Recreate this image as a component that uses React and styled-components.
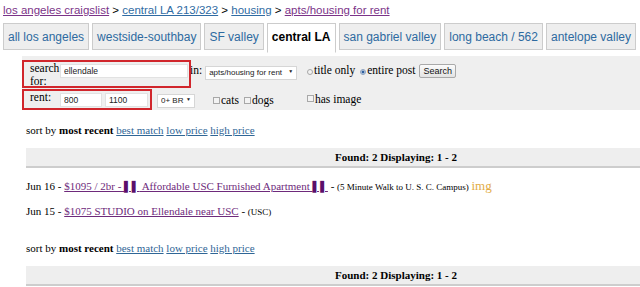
import React from 'react';
import styled, { createGlobalStyle, css } from 'styled-components';

const Global = createGlobalStyle`
  html, body { margin: 0; padding: 0; background: #fff; }
  body {
    font-family: "Liberation Serif", "Times New Roman", serif;
    font-size: 11px;
    color: #000;
    width: 640px;
    height: 287px;
    overflow: hidden;
  }
`;

const Page = styled.div`
  width: 640px;
  overflow: hidden;
`;

const Crumbs = styled.div`
  font-family: "Liberation Sans", Arial, sans-serif;
  font-size: 11.5px;
  line-height: 14px;
  height: 20px;
  box-sizing: border-box;
  padding: 3px 0 0 3px;
  white-space: nowrap;
`;

const CrumbLink = styled.a`
  color: ${p => (p.$visited ? '#7b3388' : '#2f6ba3')};
  text-decoration: underline;
`;

const Tabs = styled.div`
  display: flex;
  align-items: flex-start;
  gap: 3px;
  padding: 3px 0 0 3px;
`;

const Tab = styled.a`
  font-family: "Liberation Sans", Arial, sans-serif;
  font-size: 12px;
  line-height: 14px;
  padding: 6px 4px 5px;
  border: 1px solid #cccccc;
  background: #eeeeee;
  color: #2d6aa0;
  text-decoration: none;
  white-space: nowrap;
  ${p =>
    p.$active &&
    css`
      background: #fff;
      color: #000;
      font-weight: bold;
      border-bottom-color: transparent;
      padding-bottom: 8px;
    `}
`;

const Form = styled.div`
  margin: 3px 0 0 22px;
  padding-top: 4px;
  background: #efefef;
  display: grid;
  grid-template-columns: 285px auto;
  row-gap: 1px;
`;

const Cell = styled.div`
  display: flex;
  align-items: flex-start;
`;

const Boxed = styled.div`
  position: relative;
  z-index: 1;
  display: flex;
  align-items: flex-start;
  box-sizing: border-box;
  width: ${p => p.$w}px;
  height: ${p => p.$h}px;
  border: 2px solid #d1262c;
  padding-left: 6px;
`;

const Label = styled.span`
  font-size: 11.5px;
  line-height: 13px;
  width: ${p => (p.$w ? `${p.$w}px` : 'auto')};
  margin-top: ${p => p.$mt || 0}px;
  margin-left: ${p => p.$ml || 0}px;
`;

const TextBox = styled.input`
  box-sizing: border-box;
  width: ${p => p.$w}px;
  height: 14px;
  margin: 2px 0 0 ${p => p.$ml || 0}px;
  padding: 0 3px;
  border: 1px solid #e2e2e2;
  background: #fff;
  font-family: "Liberation Sans", Arial, sans-serif;
  font-size: 8.5px;
  color: #222;
  outline: none;
`;

const SelectWrap = styled.div`
  position: relative;
  margin: ${p => p.$mt}px 0 0 ${p => p.$ml}px;
  width: ${p => p.$w}px;
  height: 14px;
  &::after {
    content: '▼';
    position: absolute;
    right: 4px;
    top: 4px;
    font-size: 5px;
    line-height: 5px;
    color: #222;
    pointer-events: none;
  }
`;

const Select = styled.select`
  appearance: none;
  -webkit-appearance: none;
  box-sizing: border-box;
  width: 100%;
  height: 14px;
  padding: 0 10px 0 3px;
  border: 1px solid #d6d6d6;
  border-radius: 0;
  background: #fff;
  font-family: "Liberation Sans", Arial, sans-serif;
  font-size: 8px;
  line-height: 12px;
  color: #222;
`;

const Radio = styled.input`
  appearance: none;
  -webkit-appearance: none;
  box-sizing: border-box;
  width: 6px;
  height: 6px;
  margin: 9px 1px 0 ${p => p.$ml || 0}px;
  border: 1px solid #a8a8a8;
  border-radius: 50%;
  background: #f2f2f2;
  &:checked {
    background: radial-gradient(circle, #2f5f9e 0 45%, #cfdcec 60%);
    border-color: #8aa0bd;
  }
`;

const Check = styled.input`
  appearance: none;
  -webkit-appearance: none;
  box-sizing: border-box;
  width: 7px;
  height: 7px;
  margin: ${p => p.$mt || 7}px 1px 0 ${p => p.$ml || 0}px;
  border: 1px solid #a8a8a8;
  border-radius: 0;
  background: #f3f3f3;
`;

const Button = styled.button`
  box-sizing: border-box;
  height: 14px;
  margin: 4px 0 0 4px;
  padding: 0 3px;
  border: 1px solid #a9a9a9;
  border-radius: 2px;
  background: linear-gradient(#fbfbfb, #e3e3e3);
  font-family: "Liberation Sans", Arial, sans-serif;
  font-size: 9px;
  line-height: 12px;
  color: #111;
`;

const Sort = styled.div`
  margin-top: ${p => p.$mt}px;
  padding-left: 26px;
  line-height: 13px;
  white-space: nowrap;
`;

const BlueLink = styled.a`
  color: #2f6696;
  text-decoration: underline;
`;

const FoundBar = styled.div`
  margin: 11px 0 0 26px;
  width: 740px;
  line-height: 18px;
  background: #eeeeee;
  border-bottom: 2px solid #cdcdcd;
  text-align: center;
  font-weight: bold;
`;

const Listings = styled.div`
  margin-top: 12px;
  padding-left: 26px;
`;

const Row = styled.p`
  margin: 0 0 12px;
  height: 13px;
  line-height: 13px;
  white-space: nowrap;
`;

const PostLink = styled.a`
  color: #6e2a7b;
  text-decoration: underline;
`;

const Bars = styled.span`
  font-family: "DejaVu Sans", sans-serif;
  font-size: 10px;
  line-height: 10px;
  color: #5a0f6a;
`;

const Small = styled.span`
  font-size: 9px;
`;

const Img = styled.span`
  font-size: 13px;
  line-height: 10px;
  color: #e2ab45;
`;

function ResultsHeader({ mt }) {
  return (
    <>
      <Sort $mt={mt}>
        sort by <b>most recent</b> <BlueLink href="#">best match</BlueLink>{' '}
        <BlueLink href="#">low price</BlueLink> <BlueLink href="#">high price</BlueLink>
      </Sort>
      <FoundBar>Found: 2 Displaying: 1 - 2</FoundBar>
    </>
  );
}

const tabs = [
  'all los angeles',
  'westside-southbay',
  'SF valley',
  'central LA',
  'san gabriel valley',
  'long beach / 562',
  'antelope valley',
];

export default function App() {
  return (
    <Page>
      <Global />
      <Crumbs>
        <CrumbLink $visited href="#">los angeles craigslist</CrumbLink> &gt;{' '}
        <CrumbLink href="#">central LA 213/323</CrumbLink> &gt;{' '}
        <CrumbLink href="#">housing</CrumbLink> &gt;{' '}
        <CrumbLink $visited href="#">apts/housing for rent</CrumbLink>
      </Crumbs>
      <Tabs>
        {tabs.map(t => (
          <Tab key={t} href="#" $active={t === 'central LA'}>
            {t}
          </Tab>
        ))}
      </Tabs>
      <Form>
        <Cell>
          <Boxed $w={169} $h={28}>
            <Label $w={30}>search for:</Label>
            <TextBox $w={128} defaultValue="ellendale" />
          </Boxed>
          <Label $mt={4} $ml={-1}>in:</Label>
          <SelectWrap $w={92} $mt={5} $ml={3}>
            <Select defaultValue="apa">
              <option value="apa">apts/housing for rent</option>
            </Select>
          </SelectWrap>
        </Cell>
        <Cell>
          <Radio type="radio" name="srch" />
          <Label $mt={4}>title only</Label>
          <Radio type="radio" name="srch" defaultChecked $ml={5} />
          <Label $mt={4}>entire post</Label>
          <Button type="button">Search</Button>
        </Cell>
        <Cell>
          <Boxed $w={130} $h={21}>
            <Label $w={30}>rent:</Label>
            <TextBox $w={42} defaultValue="800" />
            <TextBox $w={43} $ml={3} defaultValue="1100" />
          </Boxed>
          <SelectWrap $w={38} $mt={4} $ml={5}>
            <Select defaultValue="0">
              <option value="0">0+ BR</option>
            </Select>
          </SelectWrap>
          <Check type="checkbox" $ml={18} $mt={8} />
          <Label $mt={5}>cats</Label>
          <Check type="checkbox" $ml={5} $mt={8} />
          <Label $mt={5}>dogs</Label>
        </Cell>
        <Cell>
          <Check type="checkbox" $mt={6} />
          <Label $mt={4}>has image</Label>
        </Cell>
      </Form>
      <ResultsHeader mt={14} />
      <Listings>
        <Row>
          Jun 16 -{' '}
          <PostLink href="#">
            $1095 / 2br - <Bars>▌▌</Bars> Affordable USC Furnished Apartment <Bars>▌▌</Bars>
          </PostLink>{' '}
          - <Small>(5 Minute Walk to U. S. C. Campus)</Small> <Img>img</Img>
        </Row>
        <Row>
          Jun 15 - <PostLink href="#">$1075 STUDIO on Ellendale near USC</PostLink> -{' '}
          <Small>(USC)</Small>
        </Row>
      </Listings>
      <ResultsHeader mt={24} />
    </Page>
  );
}
